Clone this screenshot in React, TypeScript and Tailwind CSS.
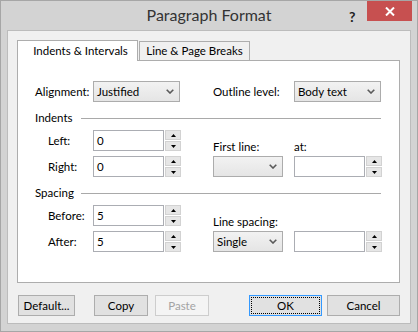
import React from "react"

const font = "font-['Segoe_UI','Lato',sans-serif]"

function Chevron() {
  return (
    <svg width="8" height="5" viewBox="0 0 8 5">
      <path d="M0.7 0.7 L4 4 L7.3 0.7" fill="none" stroke="#5a5a5a" strokeWidth="1.6" />
    </svg>
  )
}

function Select({ value, className }: { value?: string; className: string }) {
  return (
    <div className={`h-[21px] flex items-center justify-between pl-[3px] pr-[5px] border border-[#acacac] bg-linear-to-b from-[#f2f2f2] to-[#e5e5e5] ${className}`}>
      <span>{value}</span>
      <Chevron />
    </div>
  )
}

function Spinner() {
  return (
    <div className="ml-[1px] w-[16px] h-[21px] flex flex-col gap-[1px]">
      <div className="flex-1 flex items-center justify-center bg-[#e6e6e6] border border-[#d2d2d2]">
        <svg width="5" height="3" viewBox="0 0 5 3"><path d="M2.5 0 L5 3 L0 3 Z" fill="#000" /></svg>
      </div>
      <div className="flex-1 flex items-center justify-center bg-[#e6e6e6] border border-[#d2d2d2]">
        <svg width="5" height="3" viewBox="0 0 5 3"><path d="M0 0 L5 0 L2.5 3 Z" fill="#000" /></svg>
      </div>
    </div>
  )
}

function NumField({ value }: { value?: string }) {
  return (
    <div className="flex">
      <div className="w-[71px] h-[21px] flex items-center pl-[3px] border border-[#abadb3] bg-white">{value}</div>
      <Spinner />
    </div>
  )
}

function Row({ label, value }: { label: string; value: string }) {
  return (
    <div className="flex items-center pl-[13px]">
      <span className="w-[45px]">{label}</span>
      <NumField value={value} />
    </div>
  )
}

function Header({ label }: { label: string }) {
  return (
    <div className="mt-[9px] h-[14px] flex items-center pr-[18px]">
      <span className="w-[46px] leading-[14px]">{label}</span>
      <div className="flex-1 h-px bg-[#a9a9a9]" />
    </div>
  )
}

function Btn({ children, className = "", disabled = false }: { children: React.ReactNode; className?: string; disabled?: boolean }) {
  return (
    <div className={`h-[21px] flex items-center justify-center border ${disabled ? "border-[#cdcdcd] bg-[#f4f4f4] text-[#a3a3a3]" : "border-[#adadad] bg-[#e1e1e1] text-black"} ${className}`}>
      {children}
    </div>
  )
}

export default function App() {
  return (
    <div className={`w-[418px] h-[332px] bg-[#d3d3d3] border border-[#a6a6a6] flex flex-col text-[11.5px] text-black ${font}`}>
      {/* title bar */}
      <div className="h-[29px] relative flex items-center justify-center">
        <span className="text-[16px] text-[#333] leading-none -mt-[1px]">Paragraph Format</span>
        <span className="absolute left-[348px] top-[5px] text-[14px] font-bold text-[#222]">?</span>
        <div className="absolute right-[5px] top-0 w-[45px] h-[20px] bg-[#c75050] flex items-center justify-center">
          <svg width="10" height="9" viewBox="0 0 10 9">
            <path d="M1 0.5 L9 8.5 M9 0.5 L1 8.5" stroke="#fff" strokeWidth="2" />
          </svg>
        </div>
      </div>

      {/* client */}
      <div className="mx-[6px] h-[294px] border border-[#bcbcbc] bg-[#f0f0f0] pt-[9px] pl-[9px] pr-[10px]">
        {/* tabs */}
        <div className="flex items-end h-[20px]">
          <div className="w-[121px] h-[21px] -mb-px relative z-10 bg-white border border-b-0 border-[#adadad] flex items-center justify-center pl-[6px] pb-[1px]">
            Indents &amp; Intervals
          </div>
          <div className="ml-px w-[111px] h-[19px] border border-b-0 border-[#adadad] bg-[#f0f0f0] flex items-center justify-center">
            Line &amp; Page Breaks
          </div>
        </div>

        {/* panel */}
        <div className="h-[223px] border border-[#adadad] bg-white pl-[17px] pt-[20px]">
          <div className="flex items-center">
            <span className="w-[58px]">Alignment:</span>
            <Select value="Justified" className="w-[87px]" />
            <span className="ml-[33px] w-[81px]">Outline level:</span>
            <Select value="Body text" className="w-[87px]" />
          </div>

          <Header label="Indents" />
          <div className="mt-[5px] flex">
            <div className="w-[178px] flex flex-col gap-[5px]">
              <Row label="Left:" value="0" />
              <Row label="Right:" value="0" />
            </div>
            <div className="flex items-end">
              <div className="w-[81px] flex flex-col">
                <span className="leading-[16px] mb-[1px]">First line:</span>
                <Select className="w-[70px]" />
              </div>
              <div className="flex flex-col">
                <span className="leading-[16px] mb-[1px]">at:</span>
                <NumField />
              </div>
            </div>
          </div>

          <Header label="Spacing" />
          <div className="mt-[5px] flex">
            <div className="w-[178px] flex flex-col gap-[5px]">
              <Row label="Before:" value="5" />
              <Row label="After:" value="5" />
            </div>
            <div className="flex items-end">
              <div className="w-[81px] flex flex-col">
                <span className="leading-[16px] mb-[1px]">Line spacing:</span>
                <Select value="Single" className="w-[70px]" />
              </div>
              <NumField />
            </div>
          </div>
        </div>

        {/* buttons */}
        <div className="mt-[12px] flex pl-px">
          <Btn className="w-[57px]">Default...</Btn>
          <Btn className="ml-[19px] w-[54px]">Copy</Btn>
          <Btn className="ml-[7px] w-[54px]" disabled>Paste</Btn>
          <div className="ml-auto mr-[-2px] w-[73px] h-[21px] border border-[#3399ff] bg-[#e1e1e1] p-[1px]">
            <div className="w-full h-full border border-dotted border-black flex items-center justify-center">OK</div>
          </div>
          <Btn className="ml-[7px] w-[73px]">Cancel</Btn>
        </div>
      </div>
    </div>
  )
}
